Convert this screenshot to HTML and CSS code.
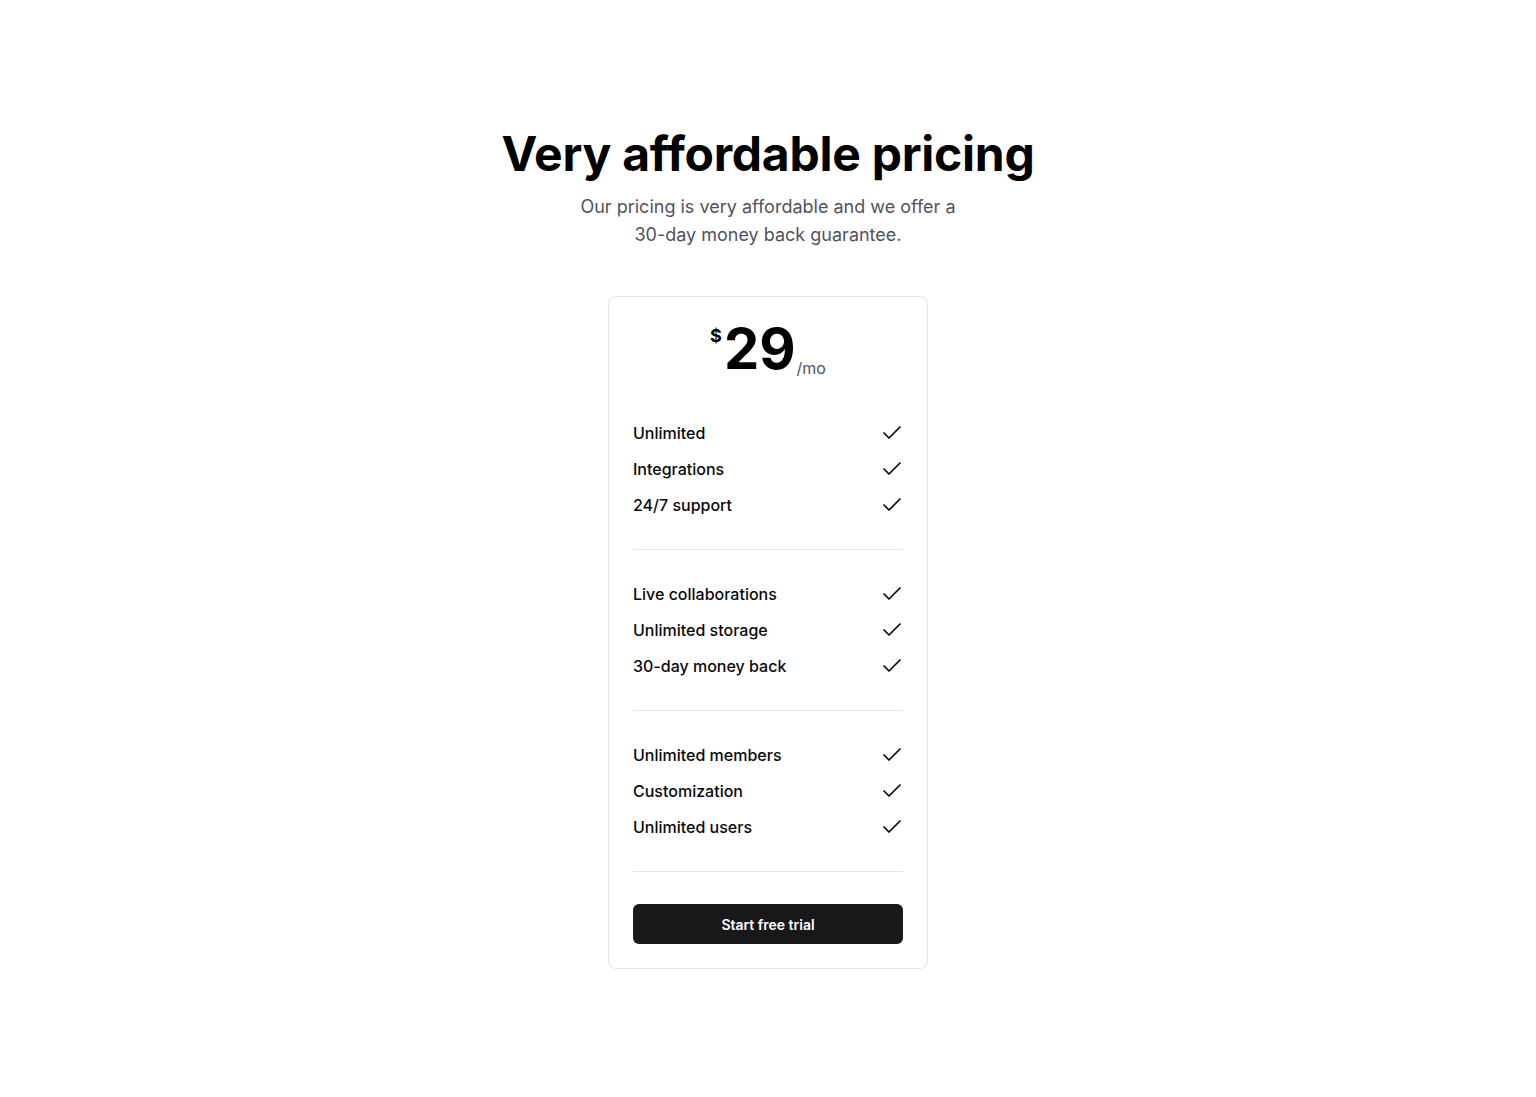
FILE: index.html
```html
<!DOCTYPE html>
<html lang="en">
<head>
<meta charset="utf-8">
<title>Pricing</title>
<link rel="stylesheet" href="styles.css">
</head>
<body>
<main class="page">
  <h1 class="title">Very affordable pricing</h1>
  <p class="subtitle">Our pricing is very affordable and we offer a 30-day money back guarantee.</p>
  <section class="card">
    <div class="price">
      <span class="currency">$</span><span class="amount">29</span><span class="period">/mo</span>
    </div>
    <ul class="group">
      <li class="feature"><span>Unlimited</span><svg class="check" viewBox="0 0 24 24"><path d="M4 12l5 5L20 6"/></svg></li>
      <li class="feature"><span>Integrations</span><svg class="check" viewBox="0 0 24 24"><path d="M4 12l5 5L20 6"/></svg></li>
      <li class="feature"><span>24/7 support</span><svg class="check" viewBox="0 0 24 24"><path d="M4 12l5 5L20 6"/></svg></li>
    </ul>
    <ul class="group">
      <li class="feature"><span>Live collaborations</span><svg class="check" viewBox="0 0 24 24"><path d="M4 12l5 5L20 6"/></svg></li>
      <li class="feature"><span>Unlimited storage</span><svg class="check" viewBox="0 0 24 24"><path d="M4 12l5 5L20 6"/></svg></li>
      <li class="feature"><span>30-day money back</span><svg class="check" viewBox="0 0 24 24"><path d="M4 12l5 5L20 6"/></svg></li>
    </ul>
    <ul class="group">
      <li class="feature"><span>Unlimited members</span><svg class="check" viewBox="0 0 24 24"><path d="M4 12l5 5L20 6"/></svg></li>
      <li class="feature"><span>Customization</span><svg class="check" viewBox="0 0 24 24"><path d="M4 12l5 5L20 6"/></svg></li>
      <li class="feature"><span>Unlimited users</span><svg class="check" viewBox="0 0 24 24"><path d="M4 12l5 5L20 6"/></svg></li>
    </ul>
    <button class="cta" type="button">Start free trial</button>
  </section>
</main>
</body>
</html>
```

FILE: styles.css
```css
* { box-sizing: border-box; }
html, body { margin: 0; padding: 0; background: #fff; }
body {
  font-family: Inter, "Noto Sans", sans-serif;
  color: #09090b;
}
.page {
  display: flex;
  flex-direction: column;
  align-items: center;
  padding-top: 124px;
}
.title {
  margin: 0;
  font-size: 48px;
  line-height: 60px;
  font-weight: 700;
  letter-spacing: -0.25px;
  color: #000;
}
.subtitle {
  margin: 9px 0 0;
  max-width: 384px;
  text-align: center;
  font-size: 18px;
  line-height: 28px;
  color: #52525b;
}
.card {
  margin-top: 47px;
  width: 320px;
  border: 1px solid #e4e4e7;
  border-radius: 8px;
  padding: 24px;
  display: flex;
  flex-direction: column;
}
.price {
  display: flex;
  justify-content: center;
  align-items: flex-start;
  height: 56px;
  margin-bottom: 38px;
}
.currency {
  font-size: 18px;
  font-weight: 700;
  line-height: 1;
  margin-top: 6px;
  margin-right: 2px;
  color: #000;
}
.amount {
  font-size: 56px;
  font-weight: 700;
  line-height: 56px;
  color: #000;
}
.period {
  align-self: flex-end;
  font-size: 16px;
  line-height: 20px;
  color: #52525b;
  margin-bottom: -1px;
  margin-left: 1px;
}
.group {
  list-style: none;
  margin: 0 0 26px;
  padding: 0 0 26px;
  border-bottom: 1px solid #e4e4e7;
}
.feature {
  display: flex;
  justify-content: space-between;
  align-items: center;
  height: 36px;
  font-size: 16px;
  font-weight: 500;
  color: #09090b;
}
.check {
  width: 24px;
  height: 24px;
  margin-right: -1px;
  fill: none;
  stroke: #09090b;
  stroke-width: 1.75;
  stroke-linecap: round;
  stroke-linejoin: round;
}
.cta {
  margin-top: 6px;
  height: 40px;
  border: 0;
  border-radius: 6px;
  background: #18181b;
  color: #fff;
  font-family: inherit;
  font-size: 14px;
  font-weight: 600;
}
```
